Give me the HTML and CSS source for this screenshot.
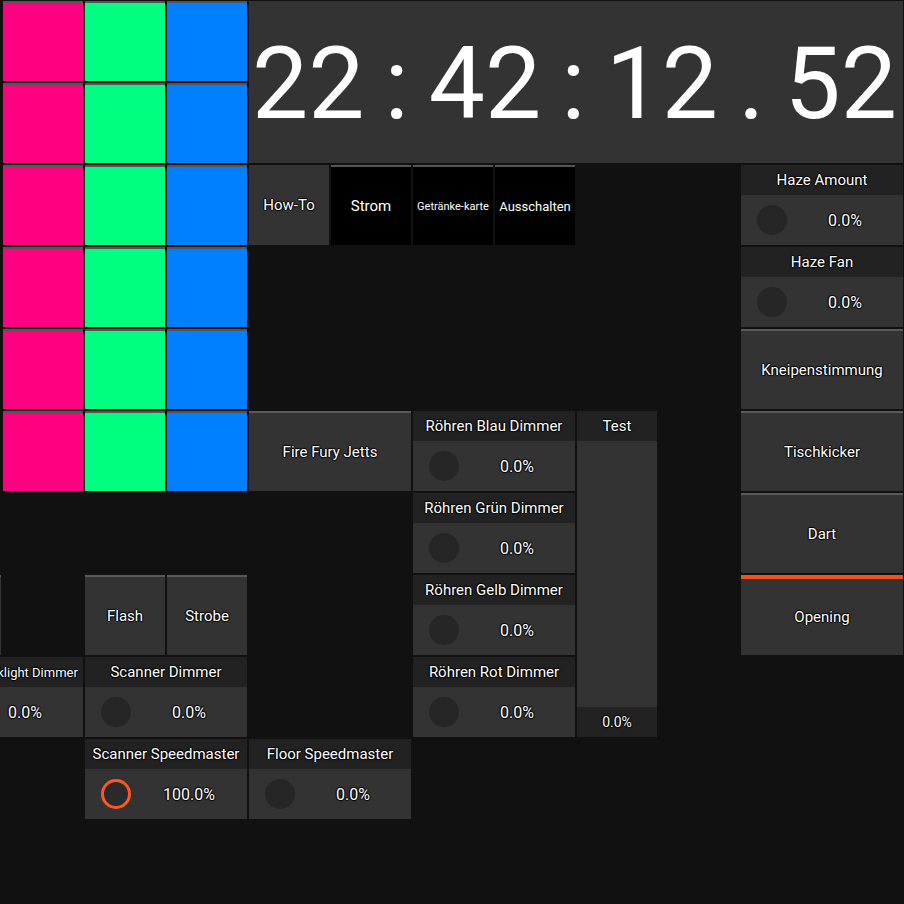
FILE: index.html
```html
<!DOCTYPE html>
<html lang="de">
<head>
<meta charset="utf-8">
<title>Kneipe</title>
<link rel="stylesheet" href="styles.css">
</head>
<body>
<div class="board">
  <div class="cell pink r1 c2"></div><div class="cell green r1 c3"></div><div class="cell blue r1 c4"></div>
  <div class="cell pink r2 c2"></div><div class="cell green r2 c3"></div><div class="cell blue r2 c4"></div>
  <div class="cell pink r3 c2"></div><div class="cell green r3 c3"></div><div class="cell blue r3 c4"></div>
  <div class="cell pink r4 c2"></div><div class="cell green r4 c3"></div><div class="cell blue r4 c4"></div>
  <div class="cell pink r5 c2"></div><div class="cell green r5 c3"></div><div class="cell blue r5 c4"></div>
  <div class="cell pink r6 c2"></div><div class="cell green r6 c3"></div><div class="cell blue r6 c4"></div>

  <div class="clock r1 c5 w8 h2"><span>22</span><span>:</span><span>42</span><span>:</span><span>12</span><span>.</span><span>52</span></div>

  <div class="btn plain r3 c5"><span class="lbl">How-To</span></div>
  <div class="btn dark r3 c6"><span class="lbl">Strom</span></div>
  <div class="btn dark r3 c7"><span class="lbl l11">Getränke-karte</span></div>
  <div class="btn dark r3 c8"><span class="lbl l13">Ausschalten</span></div>

  <div class="fader r3 c11 w2"><div class="hdr">Haze Amount</div><div class="body"><div class="knob"></div><div class="val">0.0%</div></div></div>
  <div class="fader r4 c11 w2"><div class="hdr">Haze Fan</div><div class="body"><div class="knob"></div><div class="val">0.0%</div></div></div>
  <div class="btn r5 c11 w2"><span class="lbl">Kneipenstimmung</span></div>
  <div class="btn r6 c11 w2"><span class="lbl">Tischkicker</span></div>
  <div class="btn r7 c11 w2"><span class="lbl">Dart</span></div>
  <div class="btn active r8 c11 w2"><span class="lbl">Opening</span></div>

  <div class="btn r6 c5 w2"><span class="lbl">Fire Fury Jetts</span></div>

  <div class="fader r6 c7 w2"><div class="hdr">Röhren Blau Dimmer</div><div class="body"><div class="knob"></div><div class="val">0.0%</div></div></div>
  <div class="fader r7 c7 w2"><div class="hdr">Röhren Grün Dimmer</div><div class="body"><div class="knob"></div><div class="val">0.0%</div></div></div>
  <div class="fader r8 c7 w2"><div class="hdr">Röhren Gelb Dimmer</div><div class="body"><div class="knob"></div><div class="val">0.0%</div></div></div>
  <div class="fader r9 c7 w2"><div class="hdr">Röhren Rot Dimmer</div><div class="body"><div class="knob"></div><div class="val">0.0%</div></div></div>

  <div class="slider r6 c9 h4"><div class="hdr">Test</div><div class="track"></div><div class="foot">0.0%</div></div>

  <div class="btn r8 c1"></div>
  <div class="btn r8 c3"><span class="lbl">Flash</span></div>
  <div class="btn r8 c4"><span class="lbl">Strobe</span></div>

  <div class="fader r9 c1 w2"><div class="hdr small">Decken Blacklight Dimmer</div><div class="body"><div class="knob"></div><div class="val">0.0%</div></div></div>
  <div class="fader r9 c3 w2"><div class="hdr">Scanner Dimmer</div><div class="body"><div class="knob"></div><div class="val">0.0%</div></div></div>
  <div class="fader r10 c3 w2"><div class="hdr">Scanner Speedmaster</div><div class="body"><div class="knob on"></div><div class="val">100.0%</div></div></div>
  <div class="fader r10 c5 w2"><div class="hdr">Floor Speedmaster</div><div class="body"><div class="knob"></div><div class="val">0.0%</div></div></div>
</div>
</body>
</html>
```
FILE: styles.css
```css
html, body {
  margin: 0;
  padding: 0;
  background: #111111;
  overflow: hidden;
  width: 904px;
  height: 904px;
}
body {
  font-family: Roboto, "Noto Sans", sans-serif;
  color: #fff;
}
.board {
  display: grid;
  grid-template-columns: repeat(12, 80px);
  grid-template-rows: repeat(11, 80px);
  gap: 2px;
  margin-left: -79px;
  padding-top: 1px;
}
.r1 { grid-row-start: 1; } .r2 { grid-row-start: 2; } .r3 { grid-row-start: 3; }
.r4 { grid-row-start: 4; } .r5 { grid-row-start: 5; } .r6 { grid-row-start: 6; }
.r7 { grid-row-start: 7; } .r8 { grid-row-start: 8; } .r9 { grid-row-start: 9; }
.r10 { grid-row-start: 10; }
.c1 { grid-column-start: 1; } .c2 { grid-column-start: 2; } .c3 { grid-column-start: 3; }
.c4 { grid-column-start: 4; } .c5 { grid-column-start: 5; } .c6 { grid-column-start: 6; }
.c7 { grid-column-start: 7; } .c8 { grid-column-start: 8; } .c9 { grid-column-start: 9; }
.c10 { grid-column-start: 10; } .c11 { grid-column-start: 11; }
.w2 { grid-column-end: span 2; }
.w8 { grid-column-end: span 8; }
.h2 { grid-row-end: span 2; }
.h4 { grid-row-end: span 4; }

.cell { border-top: 2px solid #555; }
.pink { background: #ff0080; }
.green { background: #00ff80; }
.blue { background: #0080ff; }

.clock {
  background: #333;
  display: flex;
  justify-content: space-between;
  align-items: center;
  padding: 4px 6px 0 3px;
  font-size: 100px;
  font-weight: 400;
  line-height: 1;
  box-sizing: border-box;
}

.lbl, .hdr, .val, .foot {
  text-shadow: 1px 0 1px #000, -1px 0 1px #000, 0 1px 1px #000, 0 -1px 1px #000;
  white-space: nowrap;
}
.btn {
  background: #333;
  border-top: 2px solid #5a5a5a;
  box-sizing: border-box;
  display: flex;
  align-items: center;
  justify-content: center;
  font-size: 15px;
}
.btn.plain { border-top: 0; }
.btn.dark { background: #000; border-top-color: #555; }
.btn.active { border-top: 4px solid #f4511e; }
.l13 { font-size: 13px; }
.l11 { font-size: 11px; }

.fader {
  display: flex;
  flex-direction: column;
  font-size: 15px;
}
.hdr {
  height: 30px;
  background: #222;
  display: flex;
  align-items: center;
  justify-content: center;
}
.hdr.small { font-size: 13px; }
.fader .body {
  flex: 1;
  background: #333;
  display: flex;
  align-items: center;
}
.knob {
  width: 30px;
  height: 30px;
  border-radius: 50%;
  background: #262626;
  margin-left: 16px;
  box-sizing: border-box;
  flex: none;
}
.knob.on {
  border: 3px solid #ff5722;
  background: #2a2a2a;
}
.val {
  flex: 1;
  text-align: center;
  font-size: 16px;
}
.slider {
  display: flex;
  flex-direction: column;
  font-size: 15px;
}
.track { flex: 1; background: #333; }
.foot {
  height: 30px;
  background: #222;
  display: flex;
  align-items: center;
  justify-content: center;
  font-size: 14px;
}
```
